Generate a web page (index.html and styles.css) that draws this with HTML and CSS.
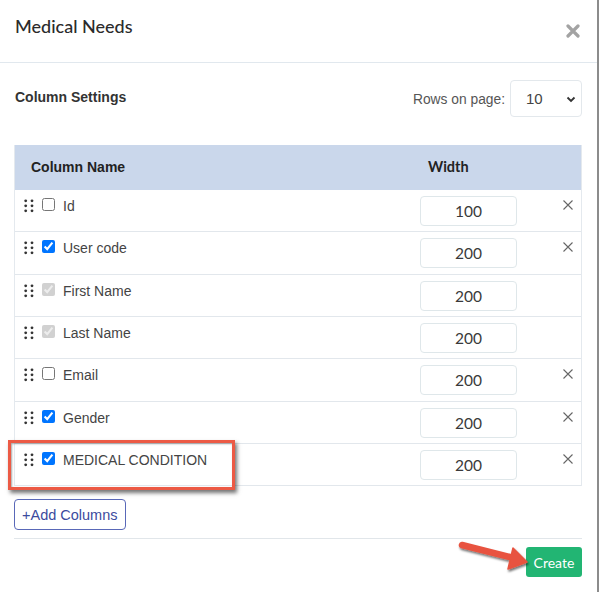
FILE: index.html
```html
<!DOCTYPE html>
<html lang="en">
<head>
    <meta charset="UTF-8">
    <meta name="viewport" content="width=device-width, initial-scale=1.0">
    <title>Medical Needs</title>
    <link rel="stylesheet" href="styles.css">
</head>
<body>
    <div class="modal">
        <div class="modal-header">
            <h2 class="modal-title">Medical Needs</h2>
            <button class="close-button" aria-label="Close">
                <svg width="14" height="14" viewBox="0 0 14 14"><path d="M2 2 L12 12 M12 2 L2 12" stroke="#a3a3a3" stroke-width="3.2" stroke-linecap="round"/></svg>
            </button>
        </div>

        <div class="modal-body">
            <div class="settings-row">
                <h3 class="settings-title">Column Settings</h3>
                <div class="rows-picker">
                    <span>Rows on page:</span>
                    <div class="select-box">
                        <span>10</span>
                        <svg width="10" height="7" viewBox="0 0 10 7"><path d="M1.5 1.5 L5 5 L8.5 1.5" fill="none" stroke="#333" stroke-width="1.8"/></svg>
                    </div>
                </div>
            </div>

            <div class="columns-table">
                <div class="table-head">
                    <div class="col-name">Column Name</div>
                    <div class="col-width">Width</div>
                    <div></div>
                </div>

                <div class="table-row">
                    <div class="col-name">
                        <svg class="handle" width="10" height="14" viewBox="0 0 10 14"><g fill="#333"><circle cx="1.7" cy="1.8" r="1.4"/><circle cx="8" cy="1.8" r="1.4"/><circle cx="1.7" cy="6.8" r="1.4"/><circle cx="8" cy="6.8" r="1.4"/><circle cx="1.7" cy="11.8" r="1.4"/><circle cx="8" cy="11.8" r="1.4"/></g></svg>
                        <input type="checkbox">
                        <span class="label">Id</span>
                    </div>
                    <div class="col-width"><input class="width-input" type="text" value="100"></div>
                    <div class="col-remove"><svg width="10" height="10" viewBox="0 0 10 10"><path d="M0.5 0.5 L9.5 9.5 M9.5 0.5 L0.5 9.5" stroke="#666" stroke-width="1.1"/></svg></div>
                </div>

                <div class="table-row">
                    <div class="col-name">
                        <svg class="handle" width="10" height="14" viewBox="0 0 10 14"><g fill="#333"><circle cx="1.7" cy="1.8" r="1.4"/><circle cx="8" cy="1.8" r="1.4"/><circle cx="1.7" cy="6.8" r="1.4"/><circle cx="8" cy="6.8" r="1.4"/><circle cx="1.7" cy="11.8" r="1.4"/><circle cx="8" cy="11.8" r="1.4"/></g></svg>
                        <input type="checkbox" checked>
                        <span class="label">User code</span>
                    </div>
                    <div class="col-width"><input class="width-input" type="text" value="200"></div>
                    <div class="col-remove"><svg width="10" height="10" viewBox="0 0 10 10"><path d="M0.5 0.5 L9.5 9.5 M9.5 0.5 L0.5 9.5" stroke="#666" stroke-width="1.1"/></svg></div>
                </div>

                <div class="table-row">
                    <div class="col-name">
                        <svg class="handle" width="10" height="14" viewBox="0 0 10 14"><g fill="#333"><circle cx="1.7" cy="1.8" r="1.4"/><circle cx="8" cy="1.8" r="1.4"/><circle cx="1.7" cy="6.8" r="1.4"/><circle cx="8" cy="6.8" r="1.4"/><circle cx="1.7" cy="11.8" r="1.4"/><circle cx="8" cy="11.8" r="1.4"/></g></svg>
                        <input type="checkbox" checked disabled>
                        <span class="label">First Name</span>
                    </div>
                    <div class="col-width"><input class="width-input" type="text" value="200"></div>
                    <div class="col-remove"></div>
                </div>

                <div class="table-row">
                    <div class="col-name">
                        <svg class="handle" width="10" height="14" viewBox="0 0 10 14"><g fill="#333"><circle cx="1.7" cy="1.8" r="1.4"/><circle cx="8" cy="1.8" r="1.4"/><circle cx="1.7" cy="6.8" r="1.4"/><circle cx="8" cy="6.8" r="1.4"/><circle cx="1.7" cy="11.8" r="1.4"/><circle cx="8" cy="11.8" r="1.4"/></g></svg>
                        <input type="checkbox" checked disabled>
                        <span class="label">Last Name</span>
                    </div>
                    <div class="col-width"><input class="width-input" type="text" value="200"></div>
                    <div class="col-remove"></div>
                </div>

                <div class="table-row">
                    <div class="col-name">
                        <svg class="handle" width="10" height="14" viewBox="0 0 10 14"><g fill="#333"><circle cx="1.7" cy="1.8" r="1.4"/><circle cx="8" cy="1.8" r="1.4"/><circle cx="1.7" cy="6.8" r="1.4"/><circle cx="8" cy="6.8" r="1.4"/><circle cx="1.7" cy="11.8" r="1.4"/><circle cx="8" cy="11.8" r="1.4"/></g></svg>
                        <input type="checkbox">
                        <span class="label">Email</span>
                    </div>
                    <div class="col-width"><input class="width-input" type="text" value="200"></div>
                    <div class="col-remove"><svg width="10" height="10" viewBox="0 0 10 10"><path d="M0.5 0.5 L9.5 9.5 M9.5 0.5 L0.5 9.5" stroke="#666" stroke-width="1.1"/></svg></div>
                </div>

                <div class="table-row">
                    <div class="col-name">
                        <svg class="handle" width="10" height="14" viewBox="0 0 10 14"><g fill="#333"><circle cx="1.7" cy="1.8" r="1.4"/><circle cx="8" cy="1.8" r="1.4"/><circle cx="1.7" cy="6.8" r="1.4"/><circle cx="8" cy="6.8" r="1.4"/><circle cx="1.7" cy="11.8" r="1.4"/><circle cx="8" cy="11.8" r="1.4"/></g></svg>
                        <input type="checkbox" checked>
                        <span class="label">Gender</span>
                    </div>
                    <div class="col-width"><input class="width-input" type="text" value="200"></div>
                    <div class="col-remove"><svg width="10" height="10" viewBox="0 0 10 10"><path d="M0.5 0.5 L9.5 9.5 M9.5 0.5 L0.5 9.5" stroke="#666" stroke-width="1.1"/></svg></div>
                </div>

                <div class="table-row highlighted">
                    <div class="col-name">
                        <svg class="handle" width="10" height="14" viewBox="0 0 10 14"><g fill="#333"><circle cx="1.7" cy="1.8" r="1.4"/><circle cx="8" cy="1.8" r="1.4"/><circle cx="1.7" cy="6.8" r="1.4"/><circle cx="8" cy="6.8" r="1.4"/><circle cx="1.7" cy="11.8" r="1.4"/><circle cx="8" cy="11.8" r="1.4"/></g></svg>
                        <input type="checkbox" checked>
                        <span class="label">MEDICAL CONDITION</span>
                    </div>
                    <div class="col-width"><input class="width-input" type="text" value="200"></div>
                    <div class="col-remove"><svg width="10" height="10" viewBox="0 0 10 10"><path d="M0.5 0.5 L9.5 9.5 M9.5 0.5 L0.5 9.5" stroke="#666" stroke-width="1.1"/></svg></div>
                    <div class="highlight-box"></div>
                </div>
            </div>

            <button class="add-button">+Add Columns</button>
        </div>

        <div class="modal-footer">
            <svg class="arrow" width="80" height="40" viewBox="0 0 80 40">
                <defs>
                    <filter id="shadow" x="-20%" y="-20%" width="140%" height="160%">
                        <feDropShadow dx="1" dy="2" stdDeviation="1.2" flood-color="#000" flood-opacity="0.55"/>
                    </filter>
                </defs>
                <g filter="url(#shadow)" fill="#e8533f" stroke="#e8533f">
                    <path d="M8 6 L60 19" stroke-width="6.5" stroke-linecap="round" fill="none"/>
                    <path d="M73 23 L59 9 L54 30 Z" stroke-width="1.5" stroke-linejoin="round"/>
                </g>
            </svg>
            <button class="create-button">Create</button>
        </div>
    </div>
</body>
</html>
```

FILE: styles.css
```css
body {
    margin: 0;
    background: white;
    font-family: 'Liberation Sans', Arial, sans-serif;
    color: #333;
}
.modal {
    position: relative;
    width: 599px;
    height: 592px;
    border-right: 2px solid #8c8c8c;
    box-sizing: border-box;
    overflow: hidden;
}
.modal-header {
    height: 63px;
    box-sizing: border-box;
    border-bottom: 1px solid #e1e8ee;
    display: flex;
    justify-content: space-between;
    align-items: flex-start;
    padding: 15px 17px 0 15px;
}
.modal-title {
    margin: 0;
    font-family: 'Lato', sans-serif;
    font-size: 18px;
    font-weight: 500;
    line-height: 22px;
    color: #2b2b2b;
}
.close-button {
    background: none;
    border: none;
    padding: 0;
    margin-top: 9px;
    cursor: pointer;
    line-height: 0;
}
.modal-body {
    padding: 17px 15px 0 14px;
}
.settings-row {
    display: flex;
    justify-content: space-between;
    align-items: flex-start;
    height: 37px;
}
.settings-title {
    margin: 9px 0 0 1px;
    font-size: 14px;
    font-weight: bold;
    line-height: 16px;
    color: #333;
}
.rows-picker {
    display: flex;
    align-items: center;
    gap: 5px;
    font-size: 13.8px;
    color: #555;
}
.rows-picker > span {
    margin-top: 2px;
}
.select-box {
    width: 72px;
    height: 37px;
    box-sizing: border-box;
    border: 1px solid #e3e8ec;
    border-radius: 4px;
    display: flex;
    justify-content: space-between;
    align-items: center;
    padding: 0 5px 0 15px;
    font-size: 15px;
    color: #444;
}
.select-box svg {
    margin-top: 2px;
}
.columns-table {
    margin-top: 28px;
    border-left: 1px solid #e4e9ee;
    border-right: 1px solid #e4e9ee;
}
.table-head,
.table-row {
    display: grid;
    grid-template-columns: 1fr 132px 64px;
}
.table-head {
    height: 45px;
    align-items: center;
    background: #cad7eb;
    font-size: 14px;
    font-weight: bold;
    color: #222;
}
.table-head .col-name {
    padding-left: 16px;
    margin-top: -1px;
}
.table-head .col-width {
    padding-left: 43px;
    margin-top: -2px;
    font-family: 'Lato', sans-serif;
    font-size: 14.5px;
}
.table-row {
    position: relative;
    height: 42.33px;
    box-sizing: border-box;
    border-bottom: 1px solid #e2e7ec;
    align-items: flex-start;
}
.table-row .col-name {
    display: flex;
    align-items: flex-start;
    padding: 8px 0 0 9px;
}
.handle {
    margin-top: 1px;
}
.table-row input[type="checkbox"] {
    width: 13px;
    height: 13px;
    margin: 0 0 0 8px;
}
.label {
    margin-left: 8px;
    font-size: 14px;
    line-height: 16px;
    color: #444;
}
.table-row .col-width {
    display: flex;
    justify-content: flex-end;
    padding-top: 6px;
}
.width-input {
    width: 97px;
    height: 30px;
    box-sizing: border-box;
    border: 1px solid #dfe7ea;
    border-radius: 4px;
    text-align: center;
    font-family: 'Lato', sans-serif;
    font-size: 15.5px;
    color: #3a3a3a;
    padding: 0;
}
.col-remove {
    display: flex;
    justify-content: flex-end;
    padding: 10px 8px 0 0;
}
.highlight-box {
    position: absolute;
    left: -7px;
    top: -4px;
    width: 227px;
    height: 50px;
    box-sizing: border-box;
    border: 3px solid #ec5a45;
    box-shadow: 2px 3px 4px rgba(0, 0, 0, 0.55), inset 1px 1px 2px rgba(0, 0, 0, 0.35);
}
.add-button {
    margin-top: 13px;
    height: 31px;
    padding: 0 7px;
    background: white;
    border: 1px solid #5968b8;
    border-radius: 4px;
    font-family: 'Liberation Sans', Arial, sans-serif;
    font-size: 14.5px;
    color: #3c4b9e;
    cursor: pointer;
}
.modal-footer {
    position: relative;
    margin: 8px 15px 0 14px;
    padding-top: 8px;
    border-top: 1px solid #e1e6ea;
    display: flex;
    justify-content: flex-end;
}
.arrow {
    position: absolute;
    left: 440px;
    top: 0;
}
.create-button {
    width: 56px;
    height: 30px;
    background: #22b573;
    color: white;
    border: none;
    border-radius: 3px;
    font-family: 'Lato', sans-serif;
    font-size: 14px;
    padding: 0;
    cursor: pointer;
}
```
